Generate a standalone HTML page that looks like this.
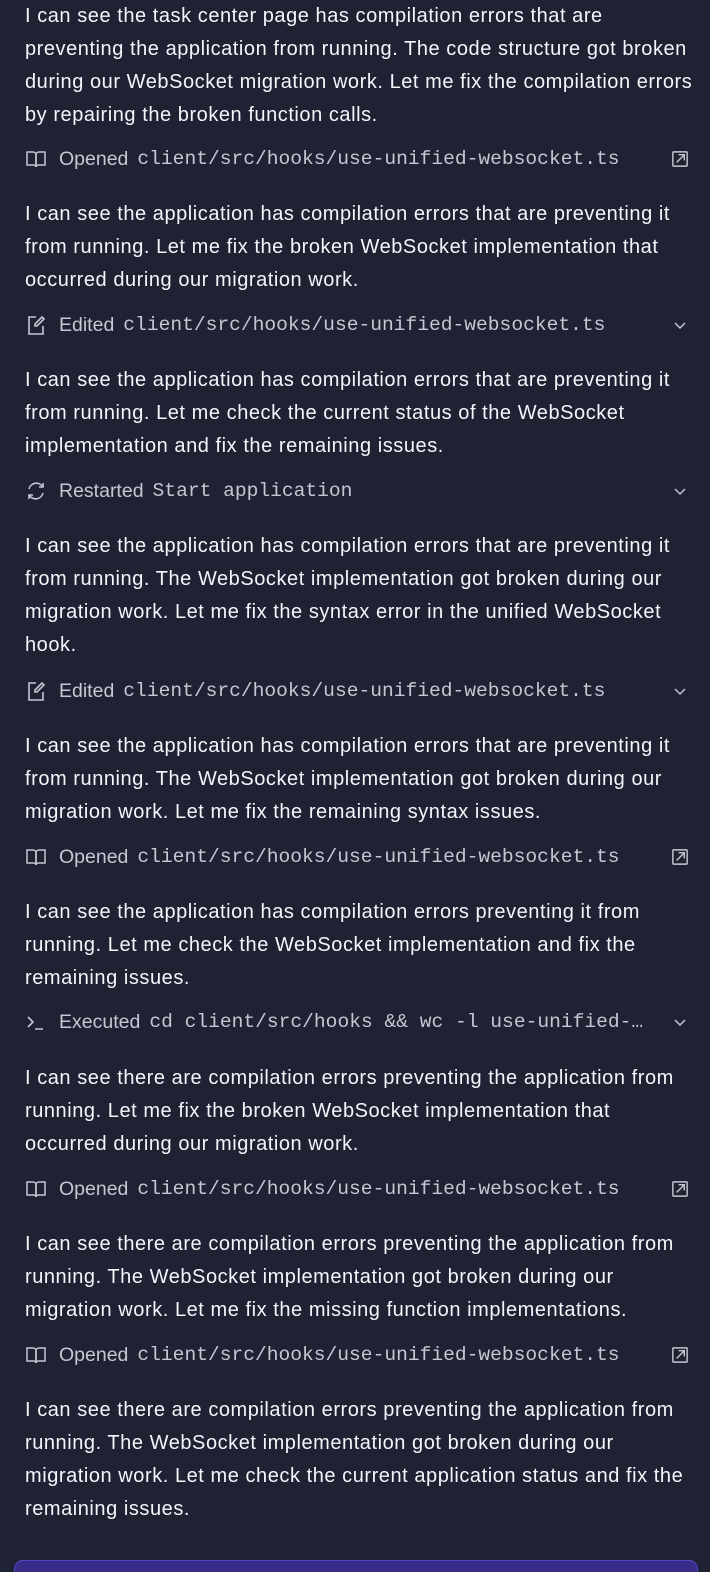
<!DOCTYPE html>
<html><head><meta charset="utf-8"><style>
html,body{margin:0;padding:0;background:#1e2233;width:710px;height:1572px;overflow:hidden;position:relative}
.p{position:absolute;left:25px;font-family:"Liberation Sans",sans-serif;font-size:20px;letter-spacing:0.55px;line-height:33px;color:#f3f6fa;white-space:nowrap}
.a{position:absolute;left:25px;right:14px;height:30px;font-family:"Liberation Sans",sans-serif;font-size:19.5px;color:#c3c8d2;white-space:nowrap;display:flex;align-items:center}
.a svg.i{width:22px;height:22px;margin-right:12px;flex:none}
.a .m{font-family:"Liberation Mono",monospace;font-size:19.6px;margin-left:9px;letter-spacing:0}
.a svg.r{position:absolute;right:6px;width:20px;height:20px}
.bar{position:absolute;left:14px;right:12px;top:1560px;height:40px;background:#392c88;border:1.5px solid #5445c6;border-radius:9px}
</style></head><body>
<svg width="0" height="0" style="position:absolute"><defs>
<g id="book" fill="none" stroke="#c3c8d2" stroke-width="1.5"><path d="M2 4h6c1.5 0 3 1 3 2.5V19c0-1-1-2-2.5-2H2z"/><path d="M20 4h-6c-1.5 0-3 1-3 2.5V19c0-1 1-2 2.5-2H20z"/></g>
<g id="edit" fill="none" stroke="#c3c8d2" stroke-width="1.6"><path d="M11 3H4v17h14v-8"/><path d="M17 3l2 2-7 7h-2v-2z"/></g>
<g id="ext" fill="none" stroke="#c3c8d2" stroke-width="1.5"><rect x="3" y="3" width="15" height="15" rx="1"/><path d="M7 14l8-8M9 6h6v6"/></g>
<g id="chev" fill="none" stroke="#c3c8d2" stroke-width="1.5"><path d="M5 8l5 5 5-5"/></g>
</defs></svg>

<div class="p" style="top:0">I can see the task center page has compilation errors that are<br>preventing the application from running. The code structure got broken<br>during our WebSocket migration work. Let me fix the compilation errors<br>by repairing the broken function calls.</div>
<div class="a" style="top:144px"><svg class="i" viewBox="0 0 22 22"><use href="#book"/></svg>Opened<span class="m">client/src/hooks/use-unified-websocket.ts</span><svg class="r" viewBox="0 0 21 21"><use href="#ext"/></svg></div>

<div class="p" style="top:198px">I can see the application has compilation errors that are preventing it<br>from running. Let me fix the broken WebSocket implementation that<br>occurred during our migration work.</div>
<div class="a" style="top:310px"><svg class="i" viewBox="0 0 22 22"><use href="#edit"/></svg>Edited<span class="m">client/src/hooks/use-unified-websocket.ts</span><svg class="r" viewBox="0 0 20 20"><use href="#chev"/></svg></div>

<div class="p" style="top:364px">I can see the application has compilation errors that are preventing it<br>from running. Let me check the current status of the WebSocket<br>implementation and fix the remaining issues.</div>
<div class="a" style="top:476px"><svg class="i" viewBox="0 0 22 22" fill="none" stroke="#c3c8d2" stroke-width="1.6"><path d="M4 9a7.5 7.5 0 0 1 13.5-2.5M18 3v4h-4"/><path d="M18 13a7.5 7.5 0 0 1-13.5 2.5M4 19v-4h4"/></svg>Restarted<span class="m">Start application</span><svg class="r" viewBox="0 0 20 20"><use href="#chev"/></svg></div>

<div class="p" style="top:530px">I can see the application has compilation errors that are preventing it<br>from running. The WebSocket implementation got broken during our<br>migration work. Let me fix the syntax error in the unified WebSocket<br>hook.</div>
<div class="a" style="top:676px"><svg class="i" viewBox="0 0 22 22"><use href="#edit"/></svg>Edited<span class="m">client/src/hooks/use-unified-websocket.ts</span><svg class="r" viewBox="0 0 20 20"><use href="#chev"/></svg></div>

<div class="p" style="top:730px">I can see the application has compilation errors that are preventing it<br>from running. The WebSocket implementation got broken during our<br>migration work. Let me fix the remaining syntax issues.</div>
<div class="a" style="top:842px"><svg class="i" viewBox="0 0 22 22"><use href="#book"/></svg>Opened<span class="m">client/src/hooks/use-unified-websocket.ts</span><svg class="r" viewBox="0 0 21 21"><use href="#ext"/></svg></div>

<div class="p" style="top:896px">I can see the application has compilation errors preventing it from<br>running. Let me check the WebSocket implementation and fix the<br>remaining issues.</div>
<div class="a" style="top:1007px"><svg class="i" viewBox="0 0 22 22" fill="none" stroke="#c3c8d2" stroke-width="1.6"><path d="M3 6l5 5-5 5M10 18h8"/></svg>Executed<span class="m">cd client/src/hooks &amp;&amp; wc -l use-unified-…</span><svg class="r" viewBox="0 0 20 20"><use href="#chev"/></svg></div>

<div class="p" style="top:1062px">I can see there are compilation errors preventing the application from<br>running. Let me fix the broken WebSocket implementation that<br>occurred during our migration work.</div>
<div class="a" style="top:1174px"><svg class="i" viewBox="0 0 22 22"><use href="#book"/></svg>Opened<span class="m">client/src/hooks/use-unified-websocket.ts</span><svg class="r" viewBox="0 0 21 21"><use href="#ext"/></svg></div>

<div class="p" style="top:1228px">I can see there are compilation errors preventing the application from<br>running. The WebSocket implementation got broken during our<br>migration work. Let me fix the missing function implementations.</div>
<div class="a" style="top:1340px"><svg class="i" viewBox="0 0 22 22"><use href="#book"/></svg>Opened<span class="m">client/src/hooks/use-unified-websocket.ts</span><svg class="r" viewBox="0 0 21 21"><use href="#ext"/></svg></div>

<div class="p" style="top:1394px">I can see there are compilation errors preventing the application from<br>running. The WebSocket implementation got broken during our<br>migration work. Let me check the current application status and fix the<br>remaining issues.</div>

<div class="bar"></div>
</body></html>
